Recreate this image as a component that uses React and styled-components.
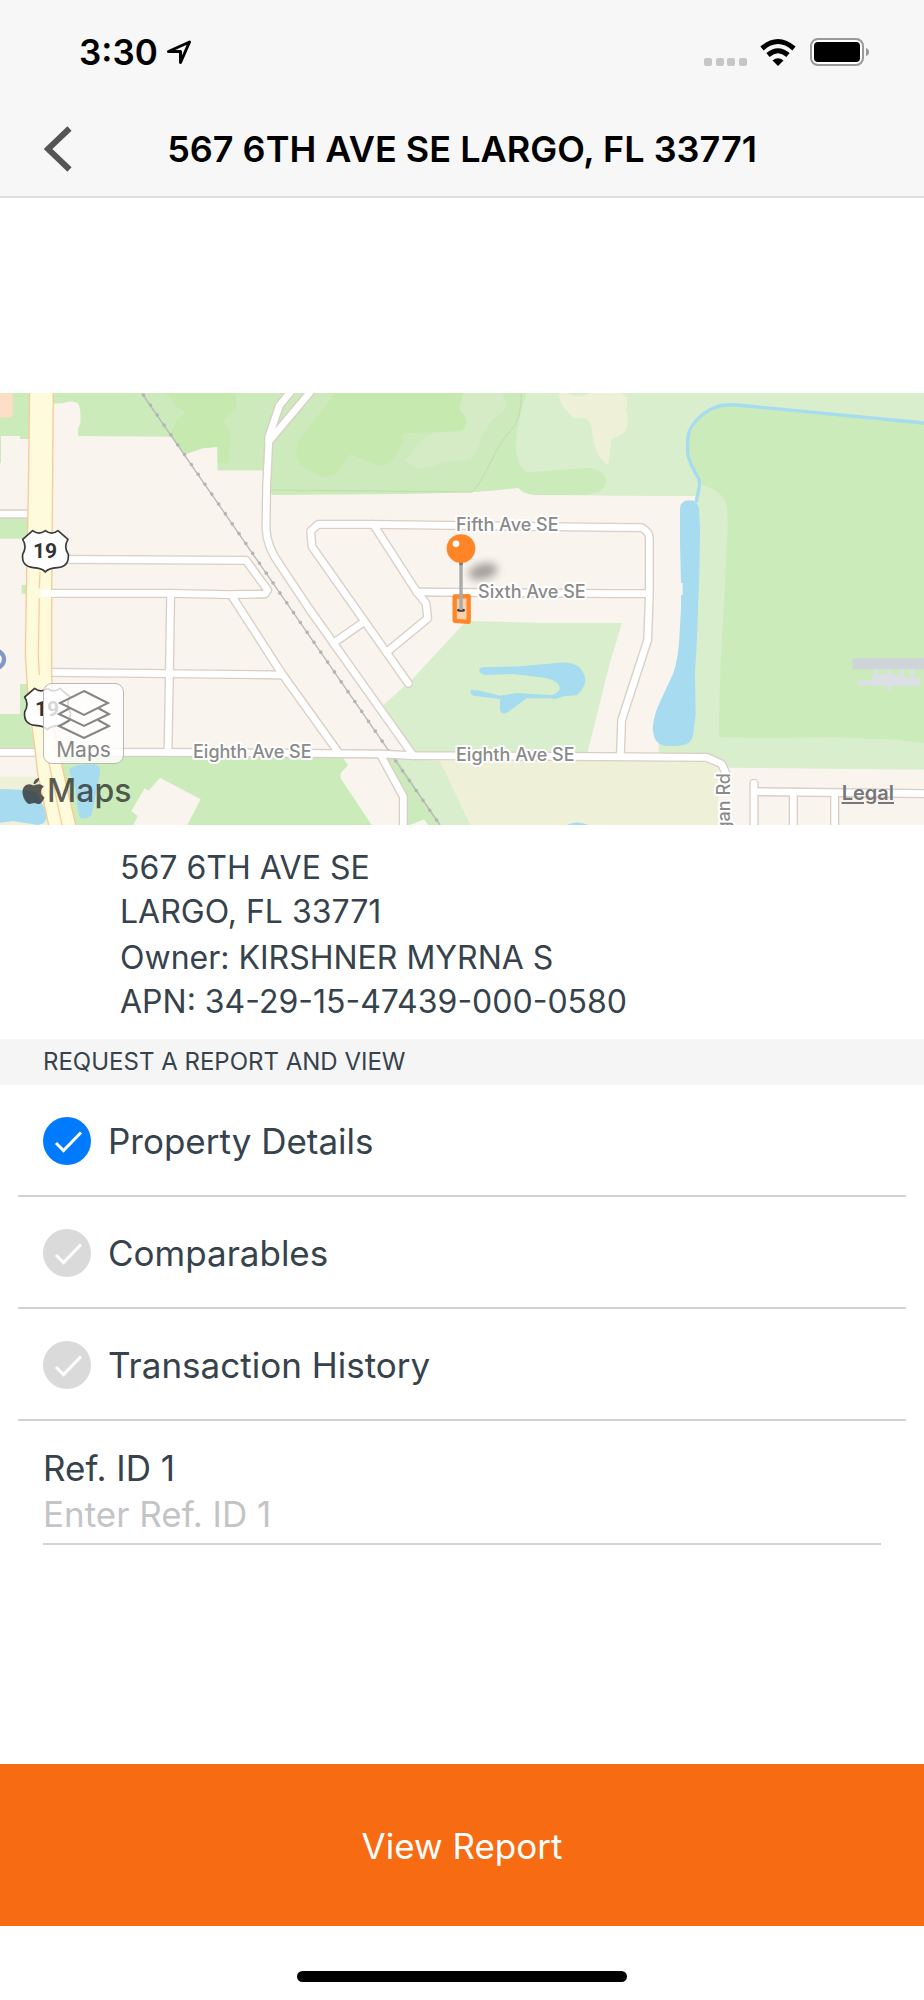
import React, { useState } from 'react';
import styled, { createGlobalStyle } from 'styled-components';
import { FaApple } from 'react-icons/fa';

const REPORTS = [
	{ id: 'details', name: 'Property Details' },
	{ id: 'comparables', name: 'Comparables' },
	{ id: 'history', name: 'Transaction History' },
];

const ROADS = [
	'M0 387H90',
	'M190 523L738 526L803 615L795 627L690 629L510 625L112 625',
	'M512 625L508 880L504 1102',
	'M150 862L845 870',
	'M697 635L845 865L1015 1102',
	'M0 1102H504L900 1105L1140 1107L1240 1112L1800 1115L2120 1117L2165 1137L2180 1170',
	'M880 10L838 62L806 157V180L800 300L798 430Q800 485 840 540L930 675L1240 1112',
	'M945 4L806 170',
	'M1115 418H955L932 438L936 485L1225 895',
	'M1115 418L1830 427L1925 428Q1948 440 1948 460V630L1943 765L1865 1005L1861 1115',
	'M1121 420L1250 620L1278 655L1283 700L1162 800',
	'M1250 621L1830 626H1945',
	'M1090 712L1000 775',
	'M1143 1112L1210 1235V1340',
	'M2262 1195V1340',
	'M2262 1220L2772 1226',
	'M2380 1222V1340',
	'M2504 1224V1340',
];

const SHIELD =
	'M98 437Q117 452 136 437Q155 452 174 437L204 463Q190 485 205 508Q208 545 172 548Q145 550 136 561Q127 550 100 548Q64 545 68 508Q82 485 68 463Z';

const Terrain = () => (
	<svg viewBox='0 24 2772 1296' width='924' height='432' aria-hidden='true'>
		<rect y='24' width='2772' height='1296' fill='#f9f4ed' />

		{/* parks */}
		<g fill='#cbebbb'>
			<path d='M0 24H90V162H60V153H3V235H0Z' />
			<path d='M0 400H82V461H0ZM65 600H80V626H65ZM60 897H86V1000L106 1088H0V987H60Z' />
			<path d='M158 24V56L188 55Q215 44 233 54Q244 66 241 115L234 132V153L512 155L555 208L610 190L653 185V256H800L815 330L1215 327L1415 322L1475 317L1555 309Q1570 328 1605 330L2090 332V24Z' />
			<path d='M120 1112L1030 1120L1044 1141L1022 1165V1180L1115 1320H200Z' />
			<path d='M1155 1115H1195L1330 1320H1285L1272 1303L1225 1322Z' />
		</g>
		<path d='M0 24H38V98H0Z' fill='#fcdfc6' />
		<path
			d='M480 24H1560L1558 85L1545 120L1510 170L1440 290L1415 321L816 315V256H653V185L605 190L555 206L425 24Z'
			fill='#cdeabc'
		/>
		<g fill='#c5e9ae'>
			<path d='M497 24H709V72L668 108L690 138L686 235H653V185L605 190L555 206L512 150L528 108L558 84L528 62Z' />
			<path d='M1005 24H1390L1378 70L1400 105Q1398 138 1362 141Q1300 140 1270 143L1210 145L1205 160L1212 172L1170 234L1140 243L1050 208L1008 266L965 278L900 240L888 208L895 170Z' />
		</g>
		<path
			d='M1390 24H1505Q1525 50 1515 75Q1465 110 1445 155Q1435 210 1405 225L1335 230Q1280 250 1260 251Q1220 240 1215 222Q1235 210 1250 180Q1280 142 1320 142L1385 138Q1402 130 1398 98L1378 72Z'
			fill='#d4ebc6'
		/>
		<path
			d='M1564 24Q1565 60 1556 95L1545 120Q1500 170 1475 225Q1440 300 1415 321L816 315'
			fill='none'
			stroke='#c0dcab'
			strokeWidth='3'
		/>
		<path
			d='M1580 24Q1545 120 1548 200Q1560 262 1590 262L1770 248Q1818 258 1818 290Q1812 325 1755 328L1790 330L2090 332L2030 1060L1975 1070L1978 1112L2150 1122L2190 1148L2772 1154V24Z'
			fill='#d8eecc'
		/>
		<path
			d='M1675 24Q1680 60 1700 78L1720 100L1748 98Q1772 102 1775 130Q1782 218 1825 240Q1830 200 1834 165L1850 155Q1880 145 1882 120Q1886 95 1878 75Q1886 50 1880 38L1866 24H1770Q1735 45 1700 24Z'
			fill='#eef0d8'
		/>
		<path
			d='M2772 115L2210 60L2145 68L2090 105L2063 165V205L2098 285L2105 298Q2170 320 2180 360L2184 405L2170 700Q2158 870 2157 1056L2310 1059L2500 1056L2690 1064L2772 1074Z'
			fill='#cbebbb'
		/>
		<path
			d='M1395 712L1402 708L1630 714H1866L1830 832L1762 1105H1240L1150 960L1235 885Z'
			fill='#d8eecc'
		/>
		<path d='M1190 1120L1320 1128L1412 1320H1322Z' fill='#d8eecc' />
		<path d='M1320 1128H2155V1320H1412Z' fill='#eef0d8' />
		<path d='M0 1175H128L160 1320H0Z' fill='#eef0d8' />
		<path
			d='M480 1178L602 1243L562 1320H400L413 1293L394 1278L434 1210L446 1217Z'
			fill='#f9f4ed'
		/>

		{/* water */}
		<g fill='#a6dbf0'>
			<path d='M2040 370Q2042 346 2070 346Q2095 348 2097 375L2100 430L2098 560L2090 780L2085 860L2087 990L2079 1050Q2077 1080 2030 1083H2000Q1960 1080 1958 1030Q1960 990 1985 940L2020 865Q2035 820 2038 760L2043 670V630H2048V594H2043L2040 470Z' />
			<path d='M1450 847L1560 844L1680 833Q1750 830 1756 885Q1755 910 1730 931L1695 933L1665 942L1650 940H1580L1520 984Q1500 992 1500 965V942L1420 932Q1405 922 1415 914L1440 917L1500 932L1550 924L1655 931Q1685 920 1678 903Q1665 880 1620 877L1540 867L1455 870Q1430 862 1441 849Z' />
			<path d='M0 1212Q60 1212 110 1222L140 1285Q142 1318 112 1320L40 1308L0 1313Z' />
			<path d='M210 1150Q230 1136 285 1138Q302 1142 300 1165L275 1290Q258 1305 240 1298Q232 1270 225 1205L209 1162Z' />
			<path d='M1700 1320Q1730 1305 1765 1320Z' />
		</g>
		<path
			d='M2772 114L2210 60Q2165 57 2145 68Q2120 75 2090 105Q2063 135 2063 165V205Q2068 235 2098 285V305L2088 352'
			fill='none'
			stroke='#a6dbf0'
			strokeWidth='10'
		/>

		{/* airport */}
		<path d='M2558 820H2772V853H2558Z' fill='#cfd4d8' />
		<path
			d='M2620 853H2632V868H2661V853H2673V868H2700V853H2712V876L2731 878V853H2742V877H2760V903H2675V917H2662V903H2572V888H2610L2620 877Z'
			fill='#dae0e4'
		/>

		{/* railway */}
		<path d='M425 24L1320 1320' stroke='#b8b8b8' strokeWidth='4' />
		<path
			d='M431 31L1320 1320'
			stroke='#b4b4b4'
			strokeWidth='11'
			strokeLinecap='round'
			strokeDasharray='0 36'
		/>

		{/* streets */}
		<g fill='none' strokeLinecap='round' strokeLinejoin='round'>
			{ROADS.map(d => (
				<path key={d} d={d} stroke='#d9cfc6' strokeWidth='28' />
			))}
			{ROADS.map(d => (
				<path key={d} d={d} stroke='#ffffff' strokeWidth='20' />
			))}
		</g>

		{/* highway */}
		<path
			d='M89 10L85 330L80 560L76 810L85 950L105 1090L112 1160L150 1340H232L192 1170L162 1030L155 870V640L160 10Z'
			fill='#fdfbdc'
			stroke='#f8c99a'
			strokeWidth='4'
		/>
		<path d='M122 625H170' stroke='#ffffff' strokeWidth='20' />
		<path
			d='M120 560L118 610M118 640L115 810L118 870M146 1130L188 1330'
			fill='none'
			stroke='#f8cf9c'
			strokeWidth='4'
		/>
		<circle cx='-14' cy='823' r='26' fill='#fff' stroke='#8595c4' strokeWidth='13' />
		<g fill='#fff' stroke='#3a3a3a' strokeWidth='5' strokeLinejoin='round'>
			<path d={SHIELD} />
			<path d={SHIELD} transform='translate(6 473)' />
		</g>
	</svg>
);

const Pin = () => (
	<svg viewBox='1300 424 240 320' x='433' y='133' width='80' height='107'>
		<defs>
			<filter id='soft' x='-50%' y='-80%' width='200%' height='260%'>
				<feGaussianBlur stdDeviation='12' />
			</filter>
		</defs>
		<ellipse
			cx='1450'
			cy='560'
			rx='44'
			ry='24'
			transform='rotate(-14 1450 560)'
			fill='#000'
			opacity='0.34'
			filter='url(#soft)'
		/>
		<path
			d='M1365 635L1407 634L1407 711L1365 708Z'
			fill='#f9d0ad'
			stroke='#ff8527'
			strokeWidth='13'
			strokeLinejoin='round'
		/>
		<ellipse cx='1384' cy='676' rx='12' ry='5' fill='#3b342e' />
		<path d='M1384 530V676' stroke='#a9a9a9' strokeWidth='10' />
		<path d='M1384 532V541' stroke='#777' strokeWidth='10' />
		<circle cx='1384' cy='491' r='43' fill='#ff8527' />
		<circle cx='1369' cy='477' r='10' fill='#fff' />
	</svg>
);

const AreaMap = () => (
	<MapArt
		viewBox='0 0 924 432'
		role='img'
		aria-label='Map of 567 6th Ave SE'>
		<Terrain />
		<ShieldText x='45' y='165'>
			19
		</ShieldText>
		<ShieldText x='47' y='323'>
			19
		</ShieldText>
		<Street x='456' y='138'>
			Fifth Ave SE
		</Street>
		<Street x='193' y='365'>
			Eighth Ave SE
		</Street>
		<Street x='456' y='368'>
			Eighth Ave SE
		</Street>
		<Street textAnchor='end' transform='translate(730 380) rotate(-90)'>
			gan Rd
		</Street>
		<Pin />
		<Street x='478' y='205'>
			Sixth Ave SE
		</Street>
	</MapArt>
);

const StatusIcons = () => (
	<svg width='165' height='28' viewBox='0 0 165 28' aria-hidden='true'>
		<g fill='#c6c6c6'>
			<rect x='0' y='20' width='8' height='8' rx='2' />
			<rect x='12' y='20' width='8' height='8' rx='2' />
			<rect x='23' y='20' width='8' height='8' rx='2' />
			<rect x='35' y='20' width='8' height='8' rx='2' />
		</g>
		<g fill='none' stroke='#000' strokeWidth='5'>
			<path d='M58 10.5Q74 -3.5 90 10.5' />
			<path d='M64 17Q74 8.5 84 17' />
		</g>
		<path d='M68.5 22.5Q74 18 79.5 22.5L74 28Z' />
		<rect x='107' y='1' width='52' height='26' rx='7' fill='#fff' stroke='#999' strokeWidth='2' />
		<rect x='110' y='4' width='46' height='20' rx='4' />
		<path d='M162 10Q165 11 165 14Q165 17 162 18Z' fill='#999' />
	</svg>
);

export default function App() {
	const [selected, setSelected] = useState({ details: true });
	const [refId, setRefId] = useState('');

	const toggle = id => setSelected({ ...selected, [id]: !selected[id] });

	return (
		<Page>
			<GlobalStyle />
			<Header>
				<StatusBar>
					<Clock>
						3:30
						<svg width='26' height='26' viewBox='0 0 26 26' aria-hidden='true'>
							<path
								d='M2.5 12.5L23.5 3L14.5 23.5V12.5Z'
								fill='none'
								stroke='#000'
								strokeWidth='3'
								strokeLinejoin='round'
							/>
						</svg>
					</Clock>
					<StatusIcons />
				</StatusBar>
				<NavBar>
					<BackButton type='button' aria-label='Back'>
						<svg width='28' height='46' viewBox='0 0 28 46'>
							<path
								d='M25.5 2.5L4 23L25.5 43.5'
								fill='none'
								stroke='#555'
								strokeWidth='6'
							/>
						</svg>
					</BackButton>
					<Title>567 6TH AVE SE LARGO, FL 33771</Title>
				</NavBar>
			</Header>

			<MapPanel>
				<AreaMap />
				<LayersButton type='button'>
					<svg width='54' height='50' viewBox='0 0 54 50' aria-hidden='true'>
						<g fill='none' stroke='#858585' strokeWidth='2'>
							<path d='M27 2L51 14L27 26L3 14Z' />
							<path d='M13 19L2 25L27 37L52 25L41 19' />
							<path d='M13 31L2 37L27 49L52 37L41 31' />
						</g>
					</svg>
					Maps
				</LayersButton>
				<Brand>
					<FaApple aria-hidden='true' />
					Maps
				</Brand>
				<LegalLink href='#legal'>Legal</LegalLink>
			</MapPanel>

			<Info>
				<div>
					<p>567 6TH AVE SE</p>
					<p>LARGO, FL 33771</p>
				</div>
				<div>
					<p>Owner: KIRSHNER MYRNA S</p>
					<p>APN: 34-29-15-47439-000-0580</p>
				</div>
			</Info>

			<SectionTitle>REQUEST A REPORT AND VIEW</SectionTitle>
			<List>
				{REPORTS.map(param => (
					<li key={param.id}>
						<Option>
							<Tick>
								<input
									type='checkbox'
									checked={!!selected[param.id]}
									onChange={() => toggle(param.id)}
								/>
								<svg width='48' height='48' viewBox='0 0 48 48' aria-hidden='true'>
									<path
										d='M13 26L20.5 33.5L38 15.5'
										fill='none'
										stroke='#fff'
										strokeWidth='3'
									/>
								</svg>
							</Tick>
							{param.name}
						</Option>
					</li>
				))}
			</List>

			<Field>
				<label htmlFor='ref-id'>Ref. ID 1</label>
				<input
					id='ref-id'
					type='text'
					placeholder='Enter Ref. ID 1'
					value={refId}
					onChange={e => setRefId(e.target.value)}
				/>
			</Field>

			<Footer>
				<ViewButton type='button'>View Report</ViewButton>
				<HomeBar />
			</Footer>
		</Page>
	);
}

const GlobalStyle = createGlobalStyle`
	* {
		box-sizing: border-box;
	}

	body {
		margin: 0;
		background: #fff;
	}

	body,
	button,
	input {
		font-family: Inter, Roboto, 'Liberation Sans', sans-serif;
	}

	h1,
	h2,
	p,
	ul {
		margin: 0;
		padding: 0;
	}
`;

const Page = styled.div`
	display: flex;
	flex-direction: column;
	min-height: 100vh;
	color: #36424c;
`;

const Header = styled.header`
	background: #f7f7f7;
	border-bottom: 2px solid #dedede;
	color: #000;
`;

const StatusBar = styled.div`
	display: flex;
	align-items: center;
	justify-content: space-between;
	height: 104px;
	padding: 0 55px 0 79px;
`;

const Clock = styled.div`
	display: flex;
	align-items: center;
	gap: 8px;
	font-size: 35px;
	font-weight: 600;
`;

const NavBar = styled.div`
	display: grid;
	grid-template-columns: 72px 1fr 72px;
	align-items: center;
	height: 92px;
	padding-bottom: 2px;
`;

const BackButton = styled.button`
	display: flex;
	justify-content: flex-end;
	padding: 0;
	border: 0;
	background: none;
	cursor: pointer;
`;

const Title = styled.h1`
	font-size: 36px;
	font-weight: 600;
	text-align: center;
`;

const MapPanel = styled.section`
	position: relative;
	margin-top: 195px;
	overflow: hidden;
`;

const MapArt = styled.svg`
	display: block;
	width: 100%;
	height: auto;
`;

const Street = styled.text`
	font-size: 18px;
	font-weight: 500;
	fill: #8a8a8a;
	stroke: #fff;
	stroke-width: 4px;
	stroke-linejoin: round;
	paint-order: stroke;
`;

const ShieldText = styled.text`
	font-family: Roboto, sans-serif;
	font-size: 21px;
	font-weight: 700;
	text-anchor: middle;
	fill: #333;
`;

const LayersButton = styled.button`
	position: absolute;
	bottom: 61px;
	left: 43px;
	display: flex;
	flex-direction: column;
	align-items: center;
	width: 81px;
	height: 81px;
	padding: 5px 0 0;
	border: 1px solid #b9b9b9;
	border-radius: 9px;
	background: rgba(255, 255, 255, 0.8);
	color: #868686;
	font-size: 21px;
	line-height: 22px;
	cursor: pointer;
`;

const Brand = styled.div`
	position: absolute;
	bottom: 14px;
	left: 22px;
	display: flex;
	align-items: center;
	gap: 2px;
	color: rgba(40, 40, 40, 0.76);
	font-size: 32px;
	font-weight: 500;
	line-height: 40px;

	svg {
		width: 23px;
		height: 30px;
	}
`;

const LegalLink = styled.a`
	position: absolute;
	right: 30px;
	bottom: 20px;
	color: #777;
	font-size: 20px;
	font-weight: 600;
	line-height: 24px;
	text-decoration-thickness: 2px;
	text-underline-offset: 2px;
`;

const Info = styled.section`
	display: flex;
	flex-direction: column;
	gap: 2px;
	padding: 21px 43px 15px 120px;
	font-size: 32px;
	line-height: 44px;
`;

const SectionTitle = styled.h2`
	padding: 0 43px;
	background: #f5f5f5;
	font-size: 24px;
	font-weight: 400;
	line-height: 46px;
`;

const List = styled.ul`
	padding: 0 18px;
	list-style: none;

	li {
		border-bottom: 2px solid #d2d2d2;
	}
`;

const Option = styled.label`
	display: flex;
	align-items: center;
	gap: 17px;
	height: 110px;
	padding: 2px 25px 0;
	font-size: 35px;
	cursor: pointer;
`;

const Tick = styled.span`
	display: grid;

	input,
	svg {
		grid-area: 1 / 1;
	}

	input {
		width: 48px;
		height: 48px;
		margin: 0;
		border-radius: 50%;
		background: #dadada;
		appearance: none;
		cursor: pointer;
	}

	input:checked {
		background: #007aff;
	}

	svg {
		pointer-events: none;
	}
`;

const Field = styled.div`
	display: flex;
	flex-direction: column;
	padding: 24px 43px;
	font-size: 35px;
	line-height: 46px;

	input {
		height: 54px;
		padding: 0 0 6px;
		border: 0;
		border-bottom: 2px solid #d2d2d2;
		border-radius: 0;
		background: none;
		color: inherit;
		font-size: 35px;
		outline: none;
	}

	input::placeholder {
		color: #c4c4c6;
	}
`;

const Footer = styled.footer`
	margin-top: auto;
`;

const ViewButton = styled.button`
	display: block;
	width: 100%;
	height: 162px;
	padding: 2px 0 0;
	border: 0;
	background: #f76b13;
	color: #fff;
	font-size: 35px;
	cursor: pointer;
`;

const HomeBar = styled.div`
	width: 330px;
	height: 11px;
	margin: 45px auto 18px;
	border-radius: 6px;
	background: #000;
`;
